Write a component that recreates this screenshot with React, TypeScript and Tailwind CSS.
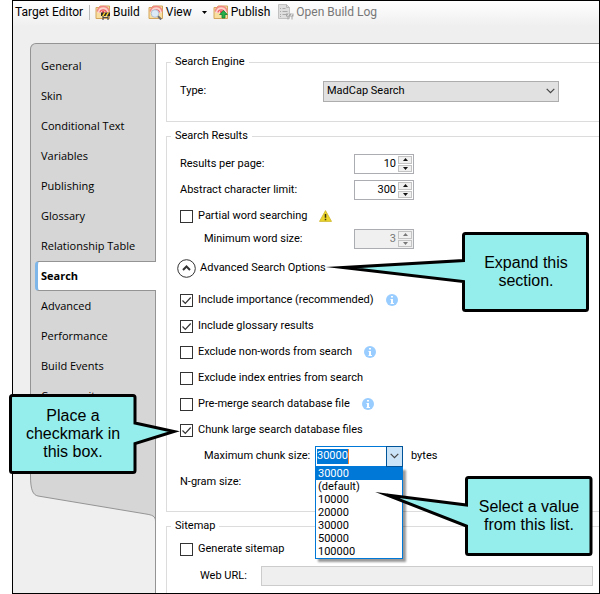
import React, { ReactNode } from "react";

function FlareGlyph() {
  return (
    <>
      <path d="M1 3.5h3l1-1.500h9.500v12.500H1z" fill="#f8dfa0" stroke="#d3a55c" />
      <path d="M2.500 9a5.700 5.700 0 0 1 11.400 0z" fill="#fbd3d0" />
      <path d="M2.200 7.500a6.100 6.100 0 0 1 12 0" fill="none" stroke="#f28686" strokeWidth="1.500" />
      <path d="M4.900 8.400a3.400 3.400 0 0 1 6.600 0" fill="none" stroke="#ee5f62" strokeWidth="1.300" />
      <circle cx="8.200" cy="8" r="1.200" fill="#e8484e" />
    </>
  );
}

function BuildIcon() {
  return (
    <svg width="16" height="16" viewBox="0 0 16 16" aria-hidden="true">
      <FlareGlyph />
      <path d="M6 8.500h9v3.500H6z" fill="#2a2a2a" />
      <path d="M7 12l2-3.500h1.600l-2 3.500zM10.500 12l2-3.500h1.600l-2 3.500z" fill="#ffd426" />
      <path d="M8 12v4M13 12v4M8 13.500h5" stroke="#4c4c4c" strokeWidth="1.200" fill="none" />
    </svg>
  );
}

function ViewIcon() {
  return (
    <svg width="16" height="16" viewBox="0 0 16 16" aria-hidden="true">
      <FlareGlyph />
      <circle cx="7" cy="9.500" r="3.800" fill="#dce9f7" stroke="#b3bfd0" />
      <path d="M10 12.300l3.200 3.200" stroke="#6d6d72" strokeWidth="2" />
    </svg>
  );
}

function PublishIcon() {
  return (
    <svg width="16" height="16" viewBox="0 0 16 16" aria-hidden="true">
      <FlareGlyph />
      <path d="M10.500 6.500l3.800 4H12V14H9v-3.500H6.700z" fill="#27b04a" stroke="#138031" strokeWidth=".8" />
    </svg>
  );
}

function LogIcon() {
  return (
    <svg width="16" height="16" viewBox="0 0 16 16" aria-hidden="true">
      <path d="M.5.5h8l3 3v11H.5z" fill="#dedede" stroke="#c2c2c2" />
      <path d="M8.500.5v3h3" fill="none" stroke="#b5b5b5" />
      <path d="M2 4.500h1M4.500 4.500h3M2 7.500h1M4.500 7.500h5M2 10.500h1M4.500 10.500h4M2 12.500h1" stroke="#a9a9a9" />
      <path d="M8 9.500h7.500v3H8z" fill="#a4a4a4" />
      <path d="M9 12l1.500-2.500h1.300L10.300 12zM12.300 12l1.500-2.500h1.200L13.600 12z" fill="#e6e6e6" />
      <path d="M10 12v3.500M14 12v3.500" stroke="#a4a4a4" />
    </svg>
  );
}

function InfoIcon() {
  return (
    <svg width="12" height="12" viewBox="0 0 12 12" role="img" aria-label="Info">
      <circle cx="6" cy="6" r="6" fill="#99ccff" />
      <path d="M5 2h2v1.500H5zM4.500 5H7v4h1v1H4.500V9H5V6h-.5z" fill="#fff" />
    </svg>
  );
}

function WarningIcon() {
  return (
    <svg width="13" height="12" viewBox="0 0 13 12" role="img" aria-label="Warning">
      <path d="M6.500.6L12.500 11.400H.5z" fill="#ecd62a" stroke="#cdb52a" strokeWidth=".8" strokeLinejoin="round" />
      <path d="M6.500 4v3.800M6.500 8.800v1.500" stroke="#3a3410" strokeWidth="1.500" />
    </svg>
  );
}

function Chevron() {
  return (
    <svg width="9" height="6" viewBox="0 0 9 6" aria-hidden="true">
      <path d="M.7.8l3.800 3.800L8.300.8" fill="none" stroke="#444" strokeWidth="1.200" />
    </svg>
  );
}

function ToolButton({ icon, label, className = "" }: { icon: ReactNode; label: string; className?: string }) {
  return (
    <button type="button" className={`flex items-center gap-0.5 whitespace-nowrap ${className}`}>
      {icon}
      <span>{label}</span>
    </button>
  );
}

function Group({ title, className = "", children }: { title: string; className?: string; children: ReactNode }) {
  return (
    <fieldset className={`min-w-0 border border-r-0 border-[#dcdcdc] pl-[13px] ${className}`}>
      <legend className="-ml-[9px] px-1 leading-4">{title}</legend>
      {children}
    </fieldset>
  );
}

function Row({ className = "h-[26px]", children }: { className?: string; children: ReactNode }) {
  return <div className={`flex items-center ${className}`}>{children}</div>;
}

function Check({ id, label, checked = false, children }: { id: string; label: string; checked?: boolean; children?: ReactNode }) {
  return (
    <Row>
      <span className="grid h-[13px] w-[13px] shrink-0">
        <input
          id={id}
          type="checkbox"
          defaultChecked={checked}
          className="peer col-start-1 row-start-1 h-[13px] w-[13px] appearance-none border border-[#333] bg-white"
        />
        <svg viewBox="0 0 13 13" className="pointer-events-none invisible col-start-1 row-start-1 h-[13px] w-[13px] peer-checked:visible" aria-hidden="true">
          <path d="M2.500 6.500l2.800 2.800 5.400-5.800" fill="none" stroke="#333" strokeWidth="1.200" />
        </svg>
      </span>
      <label htmlFor={id} className="pr-3 pl-[5px] whitespace-nowrap">
        {label}
      </label>
      {children}
    </Row>
  );
}

function Spinner({ id, value, disabled = false }: { id: string; value: number; disabled?: boolean }) {
  return (
    <span className={`flex h-5 w-[60px] border border-[#abadb3] p-px ${disabled ? "bg-[#f0f0f0] text-[#777]" : "bg-white"}`}>
      <input
        id={id}
        type="number"
        defaultValue={value}
        disabled={disabled}
        className="w-full min-w-0 appearance-none bg-transparent pr-0.5 text-right [-moz-appearance:textfield] [&::-webkit-inner-spin-button]:appearance-none"
      />
      <span className="flex w-[14px] shrink-0 flex-col gap-px">
        <button type="button" disabled={disabled} aria-label="Increase" className="flex flex-1 items-center justify-center border border-[#c3c3c3] bg-[#f0f0f0]">
          <svg width="5" height="3" viewBox="0 0 5 3" aria-hidden="true"><path d="M0 3L2.500 0 5 3z" fill={disabled ? "#777" : "#111"} /></svg>
        </button>
        <button type="button" disabled={disabled} aria-label="Decrease" className="flex flex-1 items-center justify-center border border-[#c3c3c3] bg-[#f0f0f0]">
          <svg width="5" height="3" viewBox="0 0 5 3" aria-hidden="true"><path d="M0 0L2.500 3 5 0z" fill={disabled ? "#777" : "#111"} /></svg>
        </button>
      </span>
    </span>
  );
}

function Callout({ className, path, children }: { className: string; path: string; children: ReactNode }) {
  return (
    <div className={`absolute z-20 flex h-20 w-32 items-center justify-center text-center font-['Liberation_Sans',Arial,sans-serif] text-base leading-[18px] ${className}`}>
      <svg width="128" height="80" viewBox="0 0 128 80" className="absolute inset-0 overflow-visible" aria-hidden="true">
        <path d={path} fill="#95eeec" stroke="#000" strokeWidth="3" strokeMiterlimit="20" />
      </svg>
      <p className="relative">{children}</p>
    </div>
  );
}

const sections = [
  "General",
  "Skin",
  "Conditional Text",
  "Variables",
  "Publishing",
  "Glossary",
  "Relationship Table",
  "Search",
  "Advanced",
  "Performance",
  "Build Events",
  "Community",
];

const chunkSizes = ["30000", "(default)", "10000", "20000", "30000", "50000", "100000"];

export default function App() {
  return (
    <div className="relative min-h-screen bg-white pl-3 font-[Roboto,sans-serif] text-[11px] leading-4 text-black">
      <div className="flex min-h-screen flex-col border border-black bg-[#efefef]">
        <header className="flex h-[42px] items-start bg-linear-to-b from-white to-[#efefef] to-60% pl-0.5 text-xs">
          <div className="flex h-[22px] items-center">
            <h1 className="whitespace-nowrap">Target Editor</h1>
            <span className="mr-[5px] ml-[6px] h-[15px] w-px bg-[#bdbdbd]" />
            <ToolButton icon={<BuildIcon />} label="Build" />
            <ToolButton icon={<ViewIcon />} label="View" className="ml-2" />
            <button type="button" aria-label="View options" className="ml-2 px-0.5">
              <svg width="5" height="3" viewBox="0 0 5 3" aria-hidden="true"><path d="M0 0h5L2.500 3z" /></svg>
            </button>
            <ToolButton icon={<PublishIcon />} label="Publish" className="ml-1" />
            <ToolButton icon={<LogIcon />} label="Open Build Log" className="ml-2 text-[#777]" />
          </div>
        </header>

        <div className="flex flex-1 pl-[17px]">
          <aside className="w-[126px] shrink-0 border-r border-[#949494] font-['Open_Sans','Noto_Sans',sans-serif]">
            <nav className="-mr-px rounded-tl-md border border-b-0 border-[#949494] bg-[#d6d6d6] pt-[7px] pb-[65px]">
              <ul>
                {sections.map((name) =>
                  name === "Search" ? (
                    <li key={name} className="-mr-px ml-1 h-[30px] rounded-l-sm border-y border-l-3 border-y-[#949494] border-l-[#7eb6ea] bg-white">
                      <a href="#search" aria-current="page" className="flex h-full items-center pl-[3px] font-bold">
                        {name}
                      </a>
                    </li>
                  ) : (
                    <li key={name} className="h-[30px]">
                      <a href={`#${name}`} className="flex h-full items-center pl-[10px] whitespace-nowrap">
                        {name}
                      </a>
                    </li>
                  ),
                )}
              </ul>
            </nav>
            <svg width="126" height="46" viewBox="0 0 126 46" className="-mr-px block" aria-hidden="true">
              <path d="M.5 0C.5 14 3 19 8 20L116 38C122 39 125.500 40 125.500 45V0z" fill="#d6d6d6" />
              <path d="M.5 0C.5 14 3 19 8 20L116 38C122 39 125.500 40 125.500 45" fill="none" stroke="#949494" />
              <path d="M125.500 0V46" stroke="#949494" />
            </svg>
          </aside>

          <main className="min-w-0 flex-1 border-t border-[#949494] bg-white pt-[10px] pl-[10px]">
            <Group title="Search Engine" className="pt-2 pb-[17px]">
              <Row>
                <label htmlFor="engine" className="w-[143px] shrink-0">Type:</label>
                <span className="grid w-[236px] items-center">
                  <select id="engine" className="col-start-1 row-start-1 h-[21px] w-full appearance-none border border-[#adadad] bg-[#e1e1e1] pl-[3px]">
                    <option>MadCap Search</option>
                  </select>
                  <span className="pointer-events-none col-start-1 row-start-1 mr-1 justify-self-end"><Chevron /></span>
                </span>
              </Row>
            </Group>

            <Group title="Search Results" className="mt-1.5 pt-[7px] pb-4">
              <Row>
                <label htmlFor="perpage" className="w-[174px] shrink-0">Results per page:</label>
                <Spinner id="perpage" value={10} />
              </Row>
              <Row>
                <label htmlFor="limit" className="w-[174px] shrink-0">Abstract character limit:</label>
                <Spinner id="limit" value={300} />
              </Row>
              <Check id="partial" label="Partial word searching"><WarningIcon /></Check>
              <Row className="h-5 pl-6">
                <label htmlFor="minword" className="w-[150px] shrink-0">Minimum word size:</label>
                <Spinner id="minword" value={3} disabled />
              </Row>
              <Row className="-ml-[3px] h-[38px]">
                <button type="button" aria-expanded="true" className="flex items-center gap-1">
                  <svg width="19" height="19" viewBox="0 0 19 19" aria-hidden="true">
                    <circle cx="9.500" cy="9.500" r="8.800" fill="#fff" stroke="#333" />
                    <path d="M6 11l3.500-3.500L13 11" fill="none" stroke="#333" strokeWidth="2" />
                  </svg>
                  <span>Advanced Search Options</span>
                </button>
              </Row>
              <Check id="importance" label="Include importance (recommended)" checked><InfoIcon /></Check>
              <Check id="glossary" label="Include glossary results" checked />
              <Check id="nonwords" label="Exclude non-words from search"><InfoIcon /></Check>
              <Check id="index" label="Exclude index entries from search" />
              <Check id="premerge" label="Pre-merge search database file"><InfoIcon /></Check>
              <Check id="chunk" label="Chunk large search database files" checked />
              <Row className="h-[26px] pl-6">
                <label htmlFor="chunksize" className="w-[111px] shrink-0">Maximum chunk size:</label>
                <div className="relative w-[88px]">
                  <div className="flex h-[21px] items-center justify-between border border-[#0078d7] bg-white pl-px">
                    <input id="chunksize" defaultValue="30000" role="combobox" aria-expanded="true" aria-controls="chunklist" className="h-[15px] w-8 border-r border-[#ff8728] bg-[#0078d7] text-white" />
                    <button type="button" aria-label="Show sizes" className="-my-px -mr-px flex h-[21px] w-[17px] items-center justify-center border border-[#005499] bg-[#cce4f7]">
                      <Chevron />
                    </button>
                  </div>
                  <ul id="chunklist" role="listbox" className="absolute top-full left-0 z-10 w-full border border-t-0 border-[#0078d7] bg-white leading-[13px] shadow-[3px_3px_2px_rgba(0,0,0,0.4)]">
                    {chunkSizes.map((size, i) => (
                      <li key={i} role="option" aria-selected={i === 0} className={i === 0 ? "bg-[#0078d7] pl-0.5 text-white" : "pl-0.5"}>
                        {size}
                      </li>
                    ))}
                  </ul>
                </div>
                <span className="ml-2">bytes</span>
              </Row>
              <Row>N-gram size:</Row>
            </Group>

            <Group title="Sitemap" className="mt-1.5 border-b-0 pt-0.5 pb-[3px]">
              <Check id="sitemap" label="Generate sitemap" />
              <Row className="h-7 pr-1.5 pl-5">
                <label htmlFor="weburl" className="w-[61px] shrink-0">Web URL:</label>
                <input id="weburl" disabled className="h-5 min-w-0 flex-1 border border-[#ccc] bg-[#efefef]" />
              </Row>
            </Group>
          </main>
        </div>
      </div>

      <Callout className="top-[232px] left-[462px]" path="M3.500 1.500H123.500Q125.500 1.500 125.500 3.500V76.500Q125.500 78.500 123.500 78.500H3.500Q1.500 78.500 1.500 76.500V49.500L-119 35.500L1.500 28.500V3.500Q1.500 1.500 3.500 1.500Z">
        Expand this<br />section.
      </Callout>
      <Callout className="top-[394px] left-[9px]" path="M3.500 1.500H124Q126 1.500 126 3.500V29L165 37.500L126 49.500V76.500Q126 78.500 124 78.500H3.500Q1.500 78.500 1.500 76.500V3.500Q1.500 1.500 3.500 1.500Z">
        Place a<br />checkmark in<br />this box.
      </Callout>
      <Callout className="top-[476px] left-[465px]" path="M3.500 1.500H124Q126 1.500 126 3.500V76.500Q126 78.500 124 78.500H3.500Q1.500 78.500 1.500 76.500V50L-78 19L1.500 29V3.500Q1.500 1.500 3.500 1.500Z">
        Select a value<br />from this list.
      </Callout>
    </div>
  );
}
